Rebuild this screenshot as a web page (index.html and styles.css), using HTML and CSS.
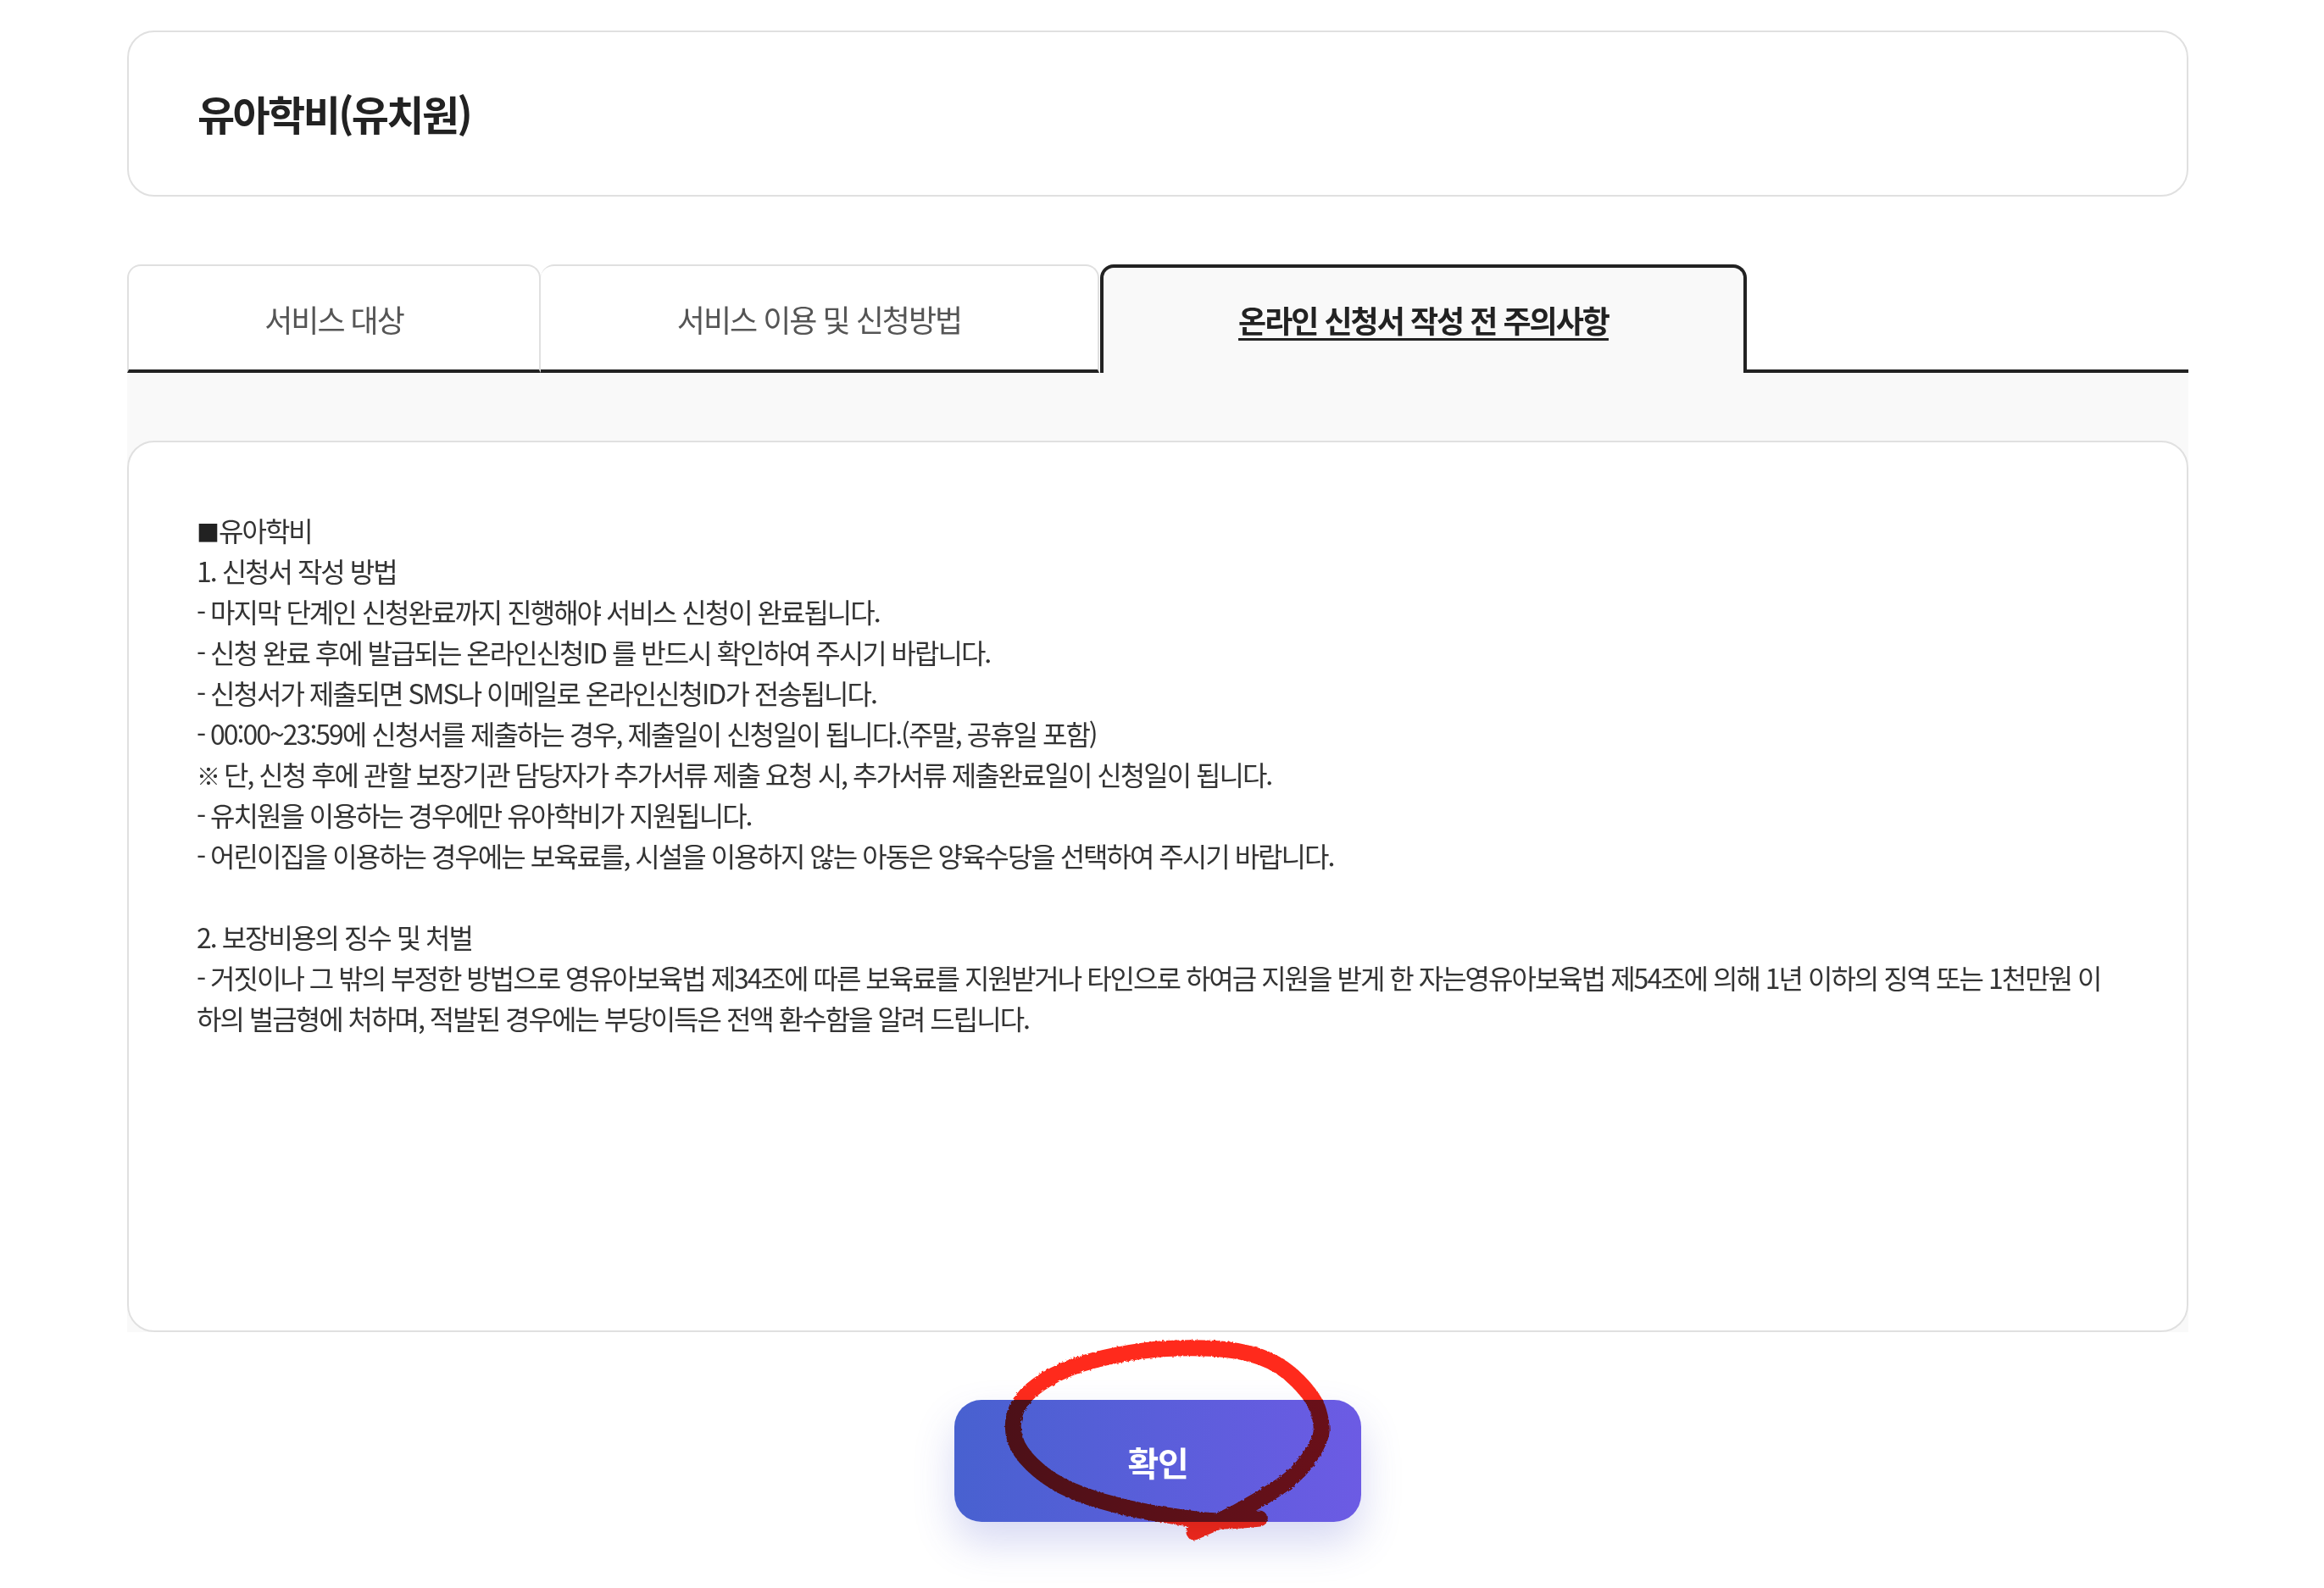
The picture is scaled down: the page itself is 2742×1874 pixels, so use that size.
FILE: index.html
```html
<!DOCTYPE html>
<html lang="ko">
<head>
<meta charset="utf-8">
<title>유아학비(유치원)</title>
<link rel="stylesheet" href="styles.css">
</head>
<body>
<main class="page">
  <header class="title-card"><h1 class="title">유아학비(유치원)</h1></header>
  <nav class="tabs">
    <a class="tab tab-first">서비스 대상</a>
    <a class="tab tab-second">서비스 이용 및 신청방법</a>
    <a class="tab tab-active">온라인 신청서 작성 전 주의사항</a>
    <span class="tab-rest"></span>
  </nav>
  <section class="panel">
    <div class="notice">
      <span class="mark-square">■</span>유아학비<br>
      1. 신청서 작성 방법<br>
      - 마지막 단계인 신청완료까지 진행해야 서비스 신청이 완료됩니다.<br>
      - 신청 완료 후에 발급되는 온라인신청ID 를 반드시 확인하여 주시기 바랍니다.<br>
      - 신청서가 제출되면 SMS나 이메일로 온라인신청ID가 전송됩니다.<br>
      - 00:00~23:59에 신청서를 제출하는 경우, 제출일이 신청일이 됩니다.(주말, 공휴일 포함)<br>
      <span class="mark-ref">※</span> 단, 신청 후에 관할 보장기관 담당자가 추가서류 제출 요청 시, 추가서류 제출완료일이 신청일이 됩니다.<br>
      - 유치원을 이용하는 경우에만 유아학비가 지원됩니다.<br>
      - 어린이집을 이용하는 경우에는 보육료를, 시설을 이용하지 않는 아동은 양육수당을 선택하여 주시기 바랍니다.<br>
      <br>
      2. 보장비용의 징수 및 처벌<br>
      - 거짓이나 그 밖의 부정한 방법으로 영유아보육법 제34조에 따른 보육료를 지원받거나 타인으로 하여금 지원을 받게 한 자는영유아보육법 제54조에 의해 1년 이하의 징역 또는 1천만원 이<br>
      하의 벌금형에 처하며, 적발된 경우에는 부당이득은 전액 환수함을 알려 드립니다.
    </div>
  </section>
  <div class="actions"><button class="confirm" type="button">확인</button></div>
</main>
<svg class="scribble" viewBox="0 0 2742 1874" aria-hidden="true">
  <defs>
    <filter id="rough" x="-5%" y="-5%" width="110%" height="110%">
      <feTurbulence type="fractalNoise" baseFrequency="0.35" numOctaves="2" seed="4"/>
      <feDisplacementMap in="SourceGraphic" scale="3.5"/>
    </filter>
  </defs>
  <path class="scribble-line" filter="url(#rough)" d="M1409 1808 Q1436 1797 1461 1783.5 Q1486 1770 1509 1755 Q1532 1740 1545 1720 Q1558 1700 1559 1690 Q1560 1680 1555.5 1665 Q1551 1650 1531.5 1630 Q1512 1610 1487.5 1601.5 Q1463 1593 1434 1591.5 Q1405 1590 1376.5 1591.5 Q1348 1593 1313.5 1600 Q1279 1607 1256 1617 Q1233 1627 1217.5 1640 Q1202 1653 1197.5 1668 Q1193 1683 1197.5 1698 Q1202 1713 1217.5 1728 Q1233 1743 1252 1753 Q1271 1763 1300 1771.5 Q1329 1780 1357.5 1785 Q1386 1790 1415 1793.5 Q1444 1797 1486 1792"/>
</svg>
</body>
</html>
```
FILE: styles.css
```css
* { box-sizing: border-box; }
html, body { margin: 0; padding: 0; background: #fff; }
body {
  position: relative;
  height: 1874px;
  overflow: hidden;
  font-family: "Noto Sans CJK KR", "Noto Sans", sans-serif;
  color: #222;
}
.page {
  width: 2432px;
  margin-left: 150px;
  padding-top: 36px;
}
.title-card {
  height: 196px;
  display: flex;
  align-items: center;
  padding: 0 81px 3px;
  background: #fff;
  border: 2px solid #e0e0e0;
  border-radius: 32px;
}
.title {
  margin: 0;
  font-size: 48px;
  font-weight: 700;
  letter-spacing: -2.6px;
  color: #222;
}
.tabs {
  display: flex;
  height: 128px;
  margin-top: 80px;
}
.tab {
  display: flex;
  align-items: center;
  justify-content: center;
  padding-top: 2px;
  font-size: 36px;
  letter-spacing: -2px;
  color: #555;
  background: #fff;
  border: 2px solid #e0e0e0;
  border-bottom: 4px solid #222;
  border-radius: 16px 16px 0 0;
}
.tab-first { width: 488px; }
.tab-second { width: 659px; border-left: 0; }
.tab-active {
  width: 763px;
  margin-left: 1px;
  padding-top: 0;
  padding-bottom: 2px;
  font-weight: 700;
  color: #222;
  text-decoration: underline;
  text-underline-offset: 6px;
  background: #f9f9f9;
  border: 4px solid #222;
  border-bottom: 0;
}
.tab-rest {
  flex: 1;
  border-bottom: 4px solid #222;
}
.panel {
  padding-top: 80px;
  background: #f9f9f9;
}
.notice {
  height: 1052px;
  padding: 79px 80px 0;
  background: #fff;
  border: 2px solid #e0e0e0;
  border-radius: 32px;
  font-size: 32px;
  line-height: 48px;
  letter-spacing: -2px;
  color: #333;
}
.mark-square {
  font-size: 27px;
  line-height: 0;
  letter-spacing: -1px;
  color: #222;
}
.mark-ref {
  font-size: 28px;
  line-height: 0;
  letter-spacing: -3px;
}
.actions {
  display: flex;
  justify-content: center;
  margin-top: 80px;
}
.confirm {
  width: 480px;
  height: 144px;
  padding: 2px 0 0;
  border: 0;
  border-radius: 32px;
  font-family: inherit;
  font-size: 40px;
  font-weight: 700;
  letter-spacing: -0.03em;
  color: #fff;
  background: linear-gradient(90deg, #4861d0, #6c5be4);
  box-shadow: 0 24px 48px rgba(72, 80, 200, 0.22);
}
.scribble {
  position: absolute;
  left: 0;
  top: 0;
  width: 2742px;
  height: 1874px;
  pointer-events: none;
  mix-blend-mode: multiply;
}
.scribble-line {
  fill: none;
  stroke: #ff2a1a;
  stroke-width: 19;
  stroke-linecap: round;
  stroke-linejoin: round;
}
```
